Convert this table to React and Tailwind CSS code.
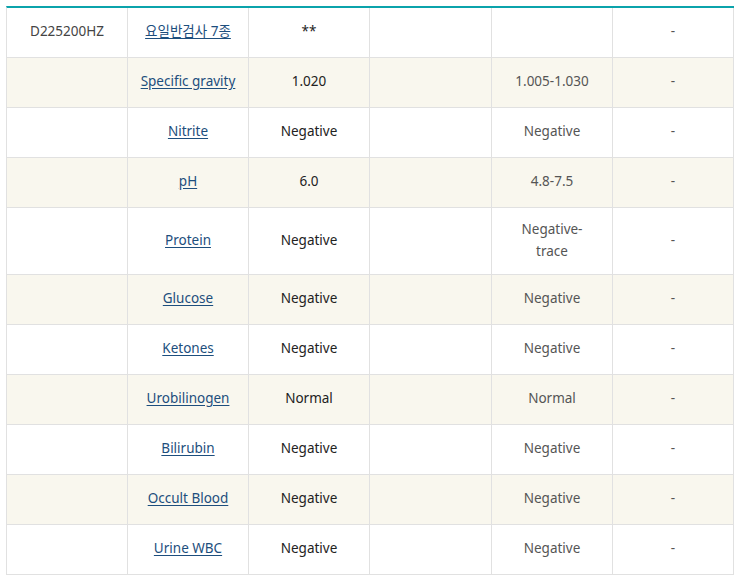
export default function App() {
  const rows = [
    { code: "D225200HZ", name: "요일반검사 7종", value: "**", ref: "", extra: "-" },
    { name: "Specific gravity", value: "1.020", ref: "1.005-1.030", extra: "-" },
    { name: "Nitrite", value: "Negative", ref: "Negative", extra: "-" },
    { name: "pH", value: "6.0", ref: "4.8-7.5", extra: "-" },
    { name: "Protein", value: "Negative", ref: "Negative-\ntrace", extra: "-", tall: true },
    { name: "Glucose", value: "Negative", ref: "Negative", extra: "-" },
    { name: "Ketones", value: "Negative", ref: "Negative", extra: "-" },
    { name: "Urobilinogen", value: "Normal", ref: "Normal", extra: "-" },
    { name: "Bilirubin", value: "Negative", ref: "Negative", extra: "-" },
    { name: "Occult Blood", value: "Negative", ref: "Negative", extra: "-" },
    { name: "Urine WBC", value: "Negative", ref: "Negative", extra: "-" },
  ];
  return (
    <div className="bg-white w-[739px] h-[575px] pt-[6px] pl-[6px]" style={{ fontFamily: '"Noto Sans", "Noto Sans CJK KR", sans-serif' }}>
      <div className="w-[728px] border-t-2 border-t-[#0ba3ab] border-l border-l-[#e1e1e1] grid grid-cols-[121px_121px_121px_122px_121px_121px] text-[13.5px] leading-[22px]">
        {rows.map((r, i) => {
          const bg = i % 2 === 1 ? "bg-[#f9f7ee]" : "bg-white";
          const h = r.tall ? "h-[67px]" : "h-[50px]";
          const cell = `${bg} ${h} border-r border-b border-[#e1e1e1] flex items-center justify-center text-center px-2 pb-[3px]`;
          return [
            <div key={i + "a"} className={`${cell} text-[#444]`}>{r.code || ""}</div>,
            <div key={i + "b"} className={cell}>
              <a href="#" className="text-[#1d4e7d] underline underline-offset-2">{r.name}</a>
            </div>,
            <div key={i + "c"} className={`${cell} text-[#222]`}>{r.value}</div>,
            <div key={i + "d"} className={cell}></div>,
            <div key={i + "e"} className={`${cell} text-[#555] whitespace-pre-line`}>{r.ref}</div>,
            <div key={i + "f"} className={`${cell} text-[#555]`}>{r.extra}</div>,
          ];
        })}
      </div>
    </div>
  );
}
